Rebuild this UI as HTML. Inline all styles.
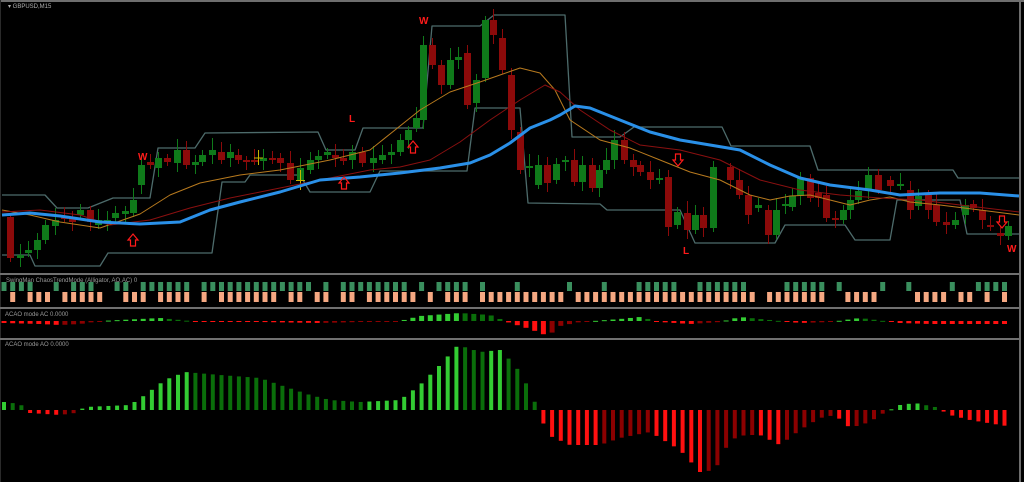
<!DOCTYPE html>
<html><head><meta charset="utf-8"><style>
html,body{margin:0;padding:0;background:#000;width:1024px;height:482px;overflow:hidden}
svg{display:block}
text{font-family:"Liberation Sans",sans-serif}
</style></head><body>
<svg id="s" width="1024" height="482" viewBox="0 0 1024 482" xmlns="http://www.w3.org/2000/svg">
<rect width="1024" height="482" fill="#000"/>
</svg>
<script>
var s=document.getElementById('s'),h='';
function L(pts,c,w){h+='<polyline fill="none" stroke="'+c+'" stroke-width="'+w+'" stroke-linejoin="round" points="'+pts.map(function(p){return p.join(',')}).join(' ')+'"/>';}
function R(x,y,w,hh,c){if(hh<0){y+=hh;hh=-hh;}if(hh<1)hh=1;h+='<rect x="'+x+'" y="'+y+'" width="'+w+'" height="'+hh+'" fill="'+c+'"/>';}
function interp(k,x){for(var i=1;i<k.length;i++){if(x<=k[i][0]){var a=k[i-1],b=k[i];return a[1]+(b[1]-a[1])*(x-a[0])/(b[0]-a[0]);}}return k[k.length-1][1];}
R(0,0,1024,2,'#6e6e6e');R(1019,0,2,482,'#6e6e6e');R(0,0,1,482,'#2a2a2a');
var bc='#4d6b6b';
L([[2,195],[45,195],[57,208],[88,208],[113,198],[150,198],[158,148],[195,148],[205,133],[318,132],[326,150],[355,150],[363,128],[423,128],[432,26],[480,26],[494,15],[565,15],[572,137],[620,137],[634,127],[722,127],[731,146],[810,146],[818,170],[953,170],[958,178],[1019,178]],bc,1.3);
L([[2,255],[30,255],[35,266],[100,266],[108,253],[212,253],[222,182],[245,182],[250,175],[300,175],[310,192],[370,192],[380,171],[467,171],[475,108],[520,108],[528,203],[600,204],[607,210],[680,210],[695,243],[775,243],[785,225],[845,225],[855,240],[890,240],[897,200],[960,200],[967,234],[1019,234]],bc,1.3);
var C=[[10,217,258],[20,258,255],[28,253,250],[37,250,240],[45,240,225],[55,226,220],[64,217,218],[72,219,222],[80,215,210],[90,210,222],[98,225,220],[107,222,220],[115,218,213],[125,214,211],[133,213,200],[141,185,165],[150,162,165],[158,168,158],[167,158,162],[177,163,150],[186,150,165],[195,165,162],[202,162,155],[212,155,150],[221,152,160],[230,158,152],[238,155,160],[246,160,161],[254,160,161],[263,161,158],[272,158,160],[280,158,163],[290,163,180],[300,180,168],[310,170,160],[318,160,156],[327,155,152],[335,155,158],[343,158,161],[352,160,152],[362,152,163],[373,163,158],[382,160,155],[391,155,152],[400,152,140],[408,140,130],[416,128,118],[423,120,45],[432,45,65],[441,65,85],[450,85,60],[458,60,57],[467,53,105],[476,103,80],[485,78,20],[493,20,35],[502,38,70],[511,75,130],[520,132,170],[529,168,166],[538,185,165],[547,165,183],[556,180,164],[565,162,160],[574,160,182],[582,182,165],[592,165,188],[599,188,170],[606,170,160],[614,160,140],[624,140,160],[633,160,167],[640,165,172],[650,172,180],[659,180,178],[668,177,227],[677,225,212],[687,213,230],[695,230,215],[703,215,228],[713,228,167],[730,167,180],[739,180,195],[748,195,215],[758,208,205],[768,210,235],[776,235,210],[785,205,204],[792,207,196],[800,196,178],[810,178,198],[818,193,198],[826,195,218],[835,218,219],[843,220,210],[850,210,200],[858,200,191],[868,190,175],[878,175,190],[890,180,186],[900,186,184],[910,190,210],[918,206,196],[928,195,210],[936,205,222],[946,222,225],[955,225,220],[965,215,205],[973,204,208],[982,210,220],[990,225,227],[1000,233,236],[1008,236,226]];
C.forEach(function(c,i){var x=c[0],o=c[1],cl=c[2],up=cl<o;var col=up?'#0f7a1a':'#8c0a0a';var t=Math.min(o,cl),b=Math.max(o,cl);var wt=t-4-((i*7)%9),wb=b+4+((i*5)%10);R(x,wt,1,wb-wt,col);R(x-3,t,7,Math.max(b-t,2),col);});
[[258,150,165],[300,170,190]].forEach(function(y){R(y[0],y[1],1,y[2]-y[1],'#c8b400');R(y[0]-4,(y[1]+y[2])/2,9,1,'#c8b400');});
L([[2,210],[30,215],[60,222],[100,228],[140,214],[170,195],[200,183],[240,175],[280,170],[330,160],[370,150],[395,130],[420,110],[450,92],[480,82],[500,75],[520,68],[540,73],[555,90],[570,120],[600,140],[630,148],[660,160],[690,172],[720,180],[750,195],[770,200],[790,196],[810,195],[830,200],[850,205],[870,200],[890,197],[910,202],[940,205],[980,210],[1019,215]],'#b87a1e',1);
L([[2,212],[40,210],[80,215],[110,225],[150,220],[190,208],[230,198],[270,190],[320,180],[370,170],[400,167],[430,160],[460,142],[490,120],[520,100],[545,85],[560,92],[580,110],[610,130],[640,145],[680,150],[720,160],[760,180],[800,190],[840,195],[880,198],[920,200],[960,205],[1019,212]],'#8a1010',1);
L([[2,215],[30,213],[60,216],[100,222],[140,224],[180,222],[210,210],[240,202],[280,192],[320,180],[360,177],[400,173],[440,168],[470,163],[490,155],[510,143],[530,128],[550,120],[560,115],[575,106],[590,108],[620,120],[650,132],[680,140],[710,145],[740,150],[770,165],[800,178],[830,185],[870,190],[900,195],[940,193],[980,193],[1019,196]],'#2a90e8',3);
function T(x,y,t,c,sz,w){h+='<text x="'+x+'" y="'+y+'" fill="'+c+'" font-size="'+sz+'" font-weight="'+(w||'normal')+'">'+t+'</text>';}
T(138,160,'W','#ff1a1a',10,'bold');T(419,24,'W','#ff1a1a',10,'bold');T(1007,252,'W','#ff1a1a',10,'bold');
T(349,122,'L','#ff1a1a',10,'bold');T(683,254,'L','#ff1a1a',10,'bold');
function AU(x,y){h+='<path d="M'+x+','+(y-6)+' l5,6 h-2.5 v6 h-5 v-6 h-2.5 z" fill="none" stroke="#ff1a1a" stroke-width="1.2"/>';}
function AD(x,y){h+='<path d="M'+x+','+(y+6)+' l5,-6 h-2.5 v-6 h-5 v6 h-2.5 z" fill="none" stroke="#ff1a1a" stroke-width="1.2"/>';}
AU(133,240);AU(344,183);AU(413,147);AD(678,160);AD(1002,222);
T(8,8,'▾ GBPUSD,M15','#b0b0b0',6);
R(0,273,1021,2,'#707070');R(0,307,1021,2,'#707070');R(0,338,1021,2,'#707070');
T(6,282,'SwingMan ChaosTrendMode (Alligator, AO,AC) 0','#9a9a9a',6);
T(5,316,'ACAO mode AC  0.0000','#9a9a9a',6);
T(5,346,'ACAO mode AO  0.0000','#9a9a9a',6);
var AO=[[4,8],[20,6],[30,-3],[60,-5],[75,-3],[85,3],[130,5],[145,15],[165,30],[185,38],[220,35],[260,32],[280,25],[310,15],[330,10],[360,8],[400,10],[420,25],[440,45],[458,65],[480,58],[500,60],[515,45],[530,20],[540,-5],[548,-25],[570,-35],[600,-35],[620,-28],[650,-22],[680,-40],[700,-62],[715,-60],[730,-30],[745,-25],[760,-25],[780,-35],[800,-20],[820,-8],[835,-5],[850,-18],[870,-12],[880,-5],[900,5],[915,7],[935,3],[950,-5],[970,-10],[1000,-15],[1020,-18]];
var AC=[[4,-2],[40,-3],[60,-4],[80,-3],[100,0],[140,2],[160,3],[200,-1],[260,-1],[320,-2],[400,0],[420,5],[460,8],[490,6],[510,-2],[530,-8],[548,-15],[560,-5],[580,-1],[620,2],[640,4],[660,-1],[690,-3],[720,-1],[740,4],[770,1],[800,-2],[830,-1],[860,3],[900,-2],[930,-3],[1020,-3]];
function col(v,p){if(v>=0)return v>=p?'#33cc33':'#0a6e0a';return v<=p?'#ff1010':'#8c0000';}
// swing panel pattern: 0 none,1 top only,2 bottom only,3 both
var P='1313221233320132313333031333333313312303313333321213330322232222212223222333332233333320223333301222210012222122'.split('').map(Number);
var pa=0,pc=0;
for(var i=0;i<116;i++){var x=4+i*8.7;var a=interp(AO,x),c=interp(AC,x);
 R(x-2,410,4,-a,col(a,pa));pa=a;
 R(x-2.5,321,5,-c,col(c,pc));pc=c;
 var p=P[i%P.length];
 if(p==1||p==3)R(x-2.5,282,5,9,'#3a8f5e');
 if(p==2||p==3)R(x-2.5,292,5,10,'#f5a882');
}
s.innerHTML+=h;
</script>
</body></html>
